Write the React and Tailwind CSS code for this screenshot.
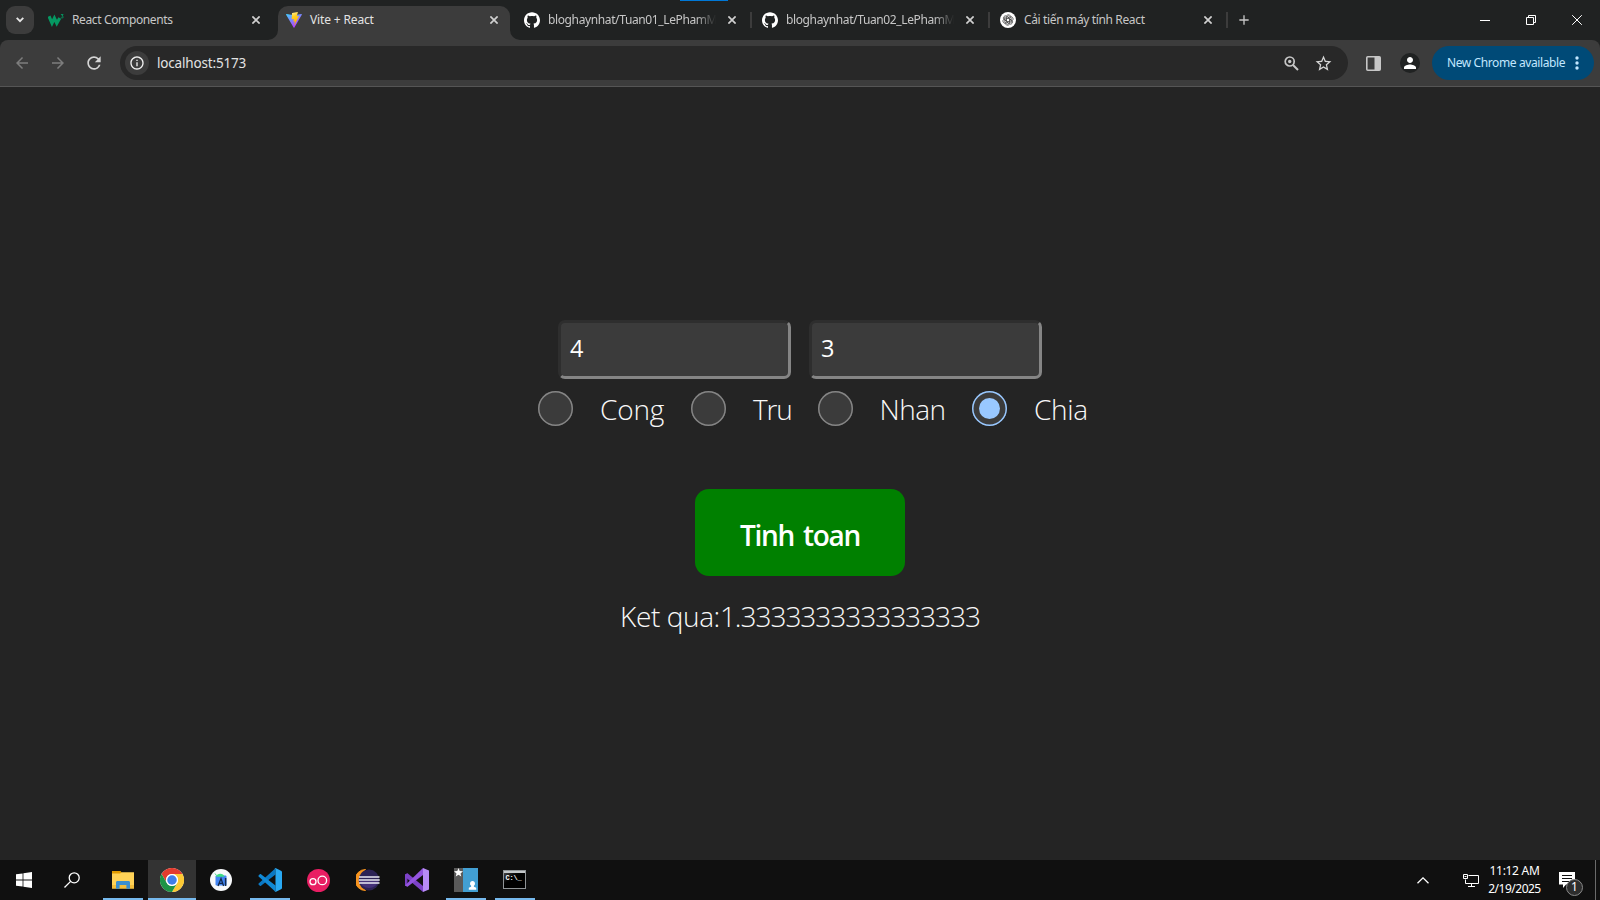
import React from "react";
import { SiGithub } from "react-icons/si";
import { MdArrowBack, MdArrowForward, MdRefresh, MdInfoOutline, MdStarBorder, MdPerson, MdAdd } from "react-icons/md";

const W3 = () => (
  <svg width="16" height="16" viewBox="0 0 16 16" fill="none">
    <path d="M1 4.200l3 7 2.400-5 2.400 5 3-5.200" stroke="#059862" strokeWidth="3.200" />
    <path d="M12.900 2.600h2.200l-1.200 1.500c1 0 1.500.5 1.300 1.200-.2.700-1.500.8-2.300.2" stroke="#059862" strokeWidth="1" />
  </svg>
);

const Vite = () => (
  <svg width="16" height="16" viewBox="0 0 16 16">
    <defs>
      <linearGradient id="vt" x1="0" y1="0" x2=".6" y2="1"><stop stopColor="#41d1ff" /><stop offset="1" stopColor="#bd34fe" /></linearGradient>
      <linearGradient id="bolt" x1=".4" y1="0" x2=".6" y2="1"><stop stopColor="#ffea83" /><stop offset=".3" stopColor="#ffcf1f" /><stop offset="1" stopColor="#ffa800" /></linearGradient>
    </defs>
    <path d="M15.8 2.7 8.4 15.5c-.2.3-.6.3-.8 0L.1 2.7c-.2-.4.1-.8.5-.7l7.4 1.2 7.3-1.2c.4-.1.7.3.5.7Z" fill="url(#vt)" />
    <path d="M11.5.1 6.2 1.1c-.1 0-.2.1-.2.3l-.3 5.6c0 .2.1.3.3.3l1.5-.3c.2 0 .3.1.3.3l-.4 2.1c0 .2.1.3.3.2l.9-.2c.2-.1.3.1.3.2l-.7 3.3c0 .2.2.3.3.1l4.4-8.8c.1-.2-.1-.4-.3-.3l-1.500.3c-.2 0-.3-.1-.3-.3l1-3.4c.1-.3-.1-.4-.3-.4Z" fill="url(#bolt)" />
  </svg>
);

const Gpt = () => (
  <svg width="16" height="16" viewBox="0 0 16 16" fill="none">
    <circle cx="8" cy="8" r="8" fill="#fff" />
    <g stroke="#444" strokeWidth=".75">
      {[0, 60, 120, 180, 240, 300].map((a) => (
        <path key={a} transform={`rotate(${a} 8 8)`} d="M6.2 9V5.2c0-3 4-3.2 4.5-.6M6.2 6.9l3.3-1.9 2.6 1.5" />
      ))}
    </g>
  </svg>
);

const tabs = [
  { icon: <W3 />, title: "React Components", cls: "tracking-[-0.37px]" },
  { icon: <Vite />, title: "Vite + React", active: true, cls: "tracking-[-0.15px]" },
  { icon: <SiGithub size={16} color="#fff" />, title: "bloghaynhat/Tuan01_LePhamM", sep: true, fade: true, cls: "tracking-[-0.38px]" },
  { icon: <SiGithub size={16} color="#fff" />, title: "bloghaynhat/Tuan02_LePhamM", sep: true, fade: true, cls: "tracking-[-0.38px]" },
  { icon: <Gpt />, title: "Cải tiến máy tính React", sep: true, cls: "tracking-[-0.36px]" },
];

function Tab({ icon, title, active, sep, fade, cls }) {
  return (
    <div className="flex h-[34px] w-[238px] shrink-0">
      <div className={"relative h-full w-[232px] pl-2 " + (active ? "rounded-t-[10px] bg-[#3c3c3c]" : "")}>
        {active && (
          <>
            <svg className="absolute -left-[10px] bottom-0" width="10" height="10"><path d="M10 0v10H0A10 10 0 0 0 10 0Z" fill="#3c3c3c" /></svg>
            <svg className="absolute -right-[10px] bottom-0" width="10" height="10"><path d="M0 0v10h10A10 10 0 0 1 0 0Z" fill="#3c3c3c" /></svg>
          </>
        )}
        <div className="flex h-7 items-center">
          <span className="flex w-4 shrink-0 items-center">{icon}</span>
          <span className={"ml-2 w-[168px] whitespace-nowrap text-[12px] leading-5 " + cls + (active ? " text-[#e3e3e3]" : " text-[#c7c7c7]") + (fade ? " [mask-image:linear-gradient(to_right,#000_88%,transparent)]" : "")}>{title}</span>
          <svg className="ml-3 shrink-0" width="8" height="8" stroke="#d0d0d0" strokeWidth="1.700"><path d="M.4.400l7.200 7.200M7.600.400.400 7.600" /></svg>
        </div>
      </div>
      {sep && <span className="mt-[6px] ml-[2px] h-4 w-[2px] bg-[#3c3c3c]" />}
    </div>
  );
}

function Field({ value }) {
  return (
    <div className="flex h-[59px] w-[233px] items-center rounded-[7px] border-[3px] border-t-[#2e2e2e] border-l-[#2e2e2e] border-r-[#858585] border-b-[#858585] bg-[#3b3b3b] pb-px pl-[9px] text-[23.5px] leading-none tracking-[-1px] text-white">
      {value}
    </div>
  );
}

function Radio({ label, on, cls, text = "" }) {
  return (
    <div className={"flex items-center " + cls}>
      <span className={"flex h-[35px] w-[35px] shrink-0 items-center justify-center rounded-full bg-[#3b3b3b] shadow-[inset_0_0_0_1.5px] " + (on ? "shadow-[#99c8ff]" : "shadow-[#858585]")}>
        {on && <span className="h-[21px] w-[21px] rounded-full bg-[#99c8ff]" />}
      </span>
      <span className={"ml-[27px] pt-px leading-8 whitespace-nowrap " + text}>{label}</span>
    </div>
  );
}

const Explorer = () => (
  <svg width="22" height="18" viewBox="0 0 22 18">
    <path d="M0 0h8.5l1.5 2v2H0Z" fill="#e09a00" />
    <path d="M0 2.6h8l1.8-1.4H22V17.500H0Z" fill="#ffd257" />
    <path d="M0 14h22v3.500H0Z" fill="#f3bd3b" />
    <path d="M4 17.700v-6.200c0-1 .6-1.500 1.500-1.500h11c.9 0 1.500.5 1.500 1.500v6.200h-3.600V14H7.600v3.700Z" fill="#3a8fd0" />
  </svg>
);
const Chrome = () => (
  <svg width="24" height="24" viewBox="0 0 48 48">
    <circle cx="24" cy="24" r="24" fill="#fff" />
    <path d="M3.200 12A24 24 0 0 1 44.800 12H24A12 12 0 0 0 13.600 30Z" fill="#e33b2e" />
    <path d="M44.800 12A24 24 0 0 1 24 48L34.400 30A12 12 0 0 0 24 12Z" fill="#fcc934" />
    <path d="M24 48A24 24 0 0 1 3.200 12L13.600 30A12 12 0 0 0 34.400 30Z" fill="#1e9446" />
    <circle cx="24" cy="24" r="12" fill="#fff" />
    <circle cx="24" cy="24" r="9.500" fill="#3f7ee8" />
  </svg>
);
const Studio = () => (
  <svg width="22" height="22" viewBox="0 0 22 22">
    <circle cx="11" cy="11" r="11" fill="#f7f9fb" />
    <rect x="5.500" y="6.500" width="11" height="10" rx="1" fill="#4285f4" />
    <path d="M6 7.800A4.500 4.500 0 0 1 14.500 7.800Z" fill="#3ddc84" />
    <path d="M5 4.500l1.500 2" stroke="#3ddc84" />
    <path d="M8 17 11 9.500l2.600 7.500M9 14.400h4" stroke="#11294d" strokeWidth="1.300" fill="none" />
    <path d="M15.600 9v8" stroke="#11294d" strokeWidth="1.500" />
  </svg>
);
const VsCode = () => (
  <svg width="24" height="24" viewBox="0 0 24 24">
    <path d="M17.500 6.500V.2L.6 15.400c-.4.400-.4.900 0 1.200l1.200 1.100c.3.300.8.300 1.200 0Z" fill="#0a78c4" />
    <path d="M17.500 17.500v6.300L.6 8.600c-.4-.4-.4-.9 0-1.200l1.200-1.100c.3-.3.800-.3 1.200 0Z" fill="#1089d6" />
    <path d="M17.500.1 23 2.700c.5.300 1 .8 1 1.400v15.800c0 .6-.4 1.100-1 1.400l-5.500 2.600c-.6.200-1.100 0-1.500-.3.600.5 1.500.1 1.500-.7V1.100c0-.8-.9-1.200-1.500-.7.400-.4 1-.6 1.500-.3Z" fill="#29a9f3" />
  </svg>
);
const Glasses = () => (
  <svg width="23" height="23" viewBox="0 0 23 23" fill="none">
    <circle cx="11.500" cy="11.500" r="11.500" fill="#e91e63" />
    <circle cx="6" cy="12.700" r="3" stroke="#fff" strokeWidth="1.300" />
    <circle cx="15.300" cy="11.400" r="4.300" stroke="#fff" strokeWidth="1.300" />
  </svg>
);
const Eclipse = () => (
  <svg width="24" height="22" viewBox="0 0 24 22">
    <path d="M9.500.5A10.500 10.500 0 0 0 9.500 21.500 12 12 0 0 1 9.500.5Z" fill="#f7941e" stroke="#f7941e" />
    <circle cx="13" cy="11" r="10.400" fill="#2c2255" />
    <path d="M3.500 12h19a10 10 0 0 1-19 0Z" fill="#443078" />
    <path d="M3 8h20.500M2.700 11h21M3 14h20.500" stroke="#e9e8f2" strokeWidth="1.500" />
  </svg>
);
const VStudio = () => (
  <svg width="24" height="24" viewBox="0 0 24 24">
    <path d="M0 6.500 2.500 5.300v13.400L0 17.500Z" fill="#6a32b0" />
    <path d="M0 6.500 2.500 5.300 18 18v6L1.500 10v7.300L0 17.500Z" fill="#7d42c8" />
    <path d="M18 0 18 7 2.500 18.700 0 17.500 5 12.500Z" fill="#9455e0" />
    <path d="M18 0l6 2.500v19L18 24Z" fill="#b78bf5" />
  </svg>
);
const Contacts = () => (
  <svg width="24" height="24" viewBox="0 0 24 24">
    <rect width="9" height="24" fill="#5a5a5a" />
    <rect x="9" width="15" height="24" fill="#429fd3" />
    <path d="M4.500 0 5.700 3.100 9 3.300 6.500 5.400 7.300 8.600 4.500 6.800 1.700 8.600 2.500 5.400 0 3.300 3.300 3.100Z" fill="#fff" />
    <path d="M18.500 13a2.400 2.600 0 0 1 1.400 4.800v1l2.300.9v2h-7.400v-2l2.300-.9v-1A2.400 2.600 0 0 1 18.500 13Z" fill="#fff" />
  </svg>
);
const Cmd = () => (
  <span className="mr-[2px] mb-px flex h-[19px] w-[23px] flex-col border border-[#8f9396] bg-gradient-to-br from-[#555] via-black to-black">
    <span className="h-[2px] shrink-0 bg-[#c4c8ca]" />
    <span className="pl-[2px] pt-px font-['Liberation_Mono',monospace] text-[7px] leading-[8px] font-bold tracking-[-0.2px] text-white">C:\_</span>
  </span>
);
const Start = () => (
  <svg width="16" height="16" viewBox="0 0 16 16" fill="#fff"><path d="M0 2.300 6.600 1.400V7.600H0ZM7.400 1.200 16 0V7.600H7.400ZM0 8.400H6.600V14.600L0 13.700ZM7.400 8.400H16V16L7.400 14.800Z" /></svg>
);
const Search = () => (
  <svg width="16" height="16" viewBox="0 0 16 16" fill="none" stroke="#fff" strokeWidth="1.300"><circle cx="10.200" cy="5.800" r="5" /><path d="M6.600 9.400.5 15.500" /></svg>
);

const apps = [
  { el: <Explorer />, w: "w-[50px]", line: "w-10" },
  { el: <Chrome />, w: "w-12 bg-[#333]", line: "w-12" },
  { el: <Studio />, w: "w-[50px]" },
  { el: <VsCode />, w: "w-12", line: "w-10" },
  { el: <Glasses />, w: "w-[49px]" },
  { el: <Eclipse />, w: "w-[49px]" },
  { el: <VStudio />, w: "w-[50px]" },
  { el: <Contacts />, w: "w-12", line: "w-10" },
  { el: <Cmd />, w: "w-[50px]", line: "w-10" },
];

export default function App() {
  return (
    <div className="relative flex h-[900px] w-[1600px] flex-col overflow-hidden bg-[#242424] font-['Noto_Sans','Open_Sans',sans-serif]">
      <div className="absolute left-[680px] top-0 h-px w-12 bg-[#0078d7]" />
      <header className="flex h-10 shrink-0 bg-[#202222] pt-[6px]">
        <div className="ml-[6px] mr-[6px] flex h-7 w-7 items-center justify-center rounded-[9px] bg-[#3c3c3c]">
          <svg width="8" height="6" fill="none" stroke="#e6e6e6" strokeWidth="1.800"><path d="M.7.900 4 4.200 7.300.900" /></svg>
        </div>
        {tabs.map((t, i) => <Tab key={i} {...t} />)}
        <MdAdd className="ml-[6px] mt-[6px]" size={16} color="#c7c7c7" />
        <div className="mt-[9px] ml-auto flex h-[10px] items-center pr-[18px]">
          <span className="h-px w-[10px] bg-white" />
          <svg className="ml-9" width="10" height="10" fill="none" stroke="#fff"><path d="M.5 2.500h7v7h-7ZM2.500 2.500v-2h7v7h-2" /></svg>
          <svg className="ml-9" width="10" height="10" stroke="#fff"><path d="M.2.200l9.600 9.600M9.800.200.200 9.800" /></svg>
        </div>
      </header>

      <div className="flex h-[47px] shrink-0 bg-[#202222]">
        <div className="flex h-full w-full items-start rounded-t-[8px] border-b border-[#555] bg-[#3c3c3c] pt-[6px]">
          <div className="flex h-[34px] w-[120px] shrink-0 items-center gap-[18px] pl-[13px]">
            <MdArrowBack size={18} color="#7d7d7d" />
            <MdArrowForward size={18} color="#7d7d7d" />
            <MdRefresh className="-ml-px" size={20} color="#d5d5d5" />
          </div>
          <div className="flex h-[34px] w-[1228px] shrink-0 items-center rounded-full bg-[#282828] pl-[5px]">
            <span className="flex h-6 w-6 items-center justify-center rounded-full bg-[#3c3c3c]"><MdInfoOutline size={16} color="#f0f0f0" /></span>
            <span className="ml-2 text-[13.500px] leading-5 tracking-[-0.17px] text-[#e3e3e3]">localhost:5173</span>
            <svg className="ml-auto" width="15" height="15" viewBox="0 0 15 15" fill="none" stroke="#c7c7c7"><circle cx="5.700" cy="5.500" r="4.500" strokeWidth="1.700" /><circle cx="5.700" cy="5.500" r="1.700" fill="#c7c7c7" stroke="none" /><path d="M9 9l5 5" strokeWidth="1.900" /></svg>
            <MdStarBorder className="mr-[15px] ml-[15px]" size={19} color="#d5d5d5" />
          </div>
          <div className="ml-[18px] flex h-[34px] items-center">
            <svg width="15" height="15" viewBox="0 0 15 15"><rect x=".8" y=".8" width="13.400" height="13.400" rx="1" fill="none" stroke="#c7c7c7" strokeWidth="1.600" /><path d="M8.500 1H14v13H8.500Z" fill="#c7c7c7" /></svg>
            <span className="ml-[19px] flex h-5 w-5 items-center justify-center rounded-full bg-[#202222]"><MdPerson size={18} color="#fff" /></span>
          </div>
          <div className="ml-3 flex h-[34px] w-[162px] items-center rounded-full bg-[#004a77] pl-[15px] text-[#c2e7ff]">
            <span className="w-[122px] text-[12px] leading-5 tracking-[-0.4px] whitespace-nowrap">New Chrome available</span>
            <svg className="ml-[6px]" width="4" height="14" fill="#c2e7ff"><circle cx="2" cy="2" r="1.700" /><circle cx="2" cy="7" r="1.700" /><circle cx="2" cy="12" r="1.700" /></svg>
          </div>
        </div>
      </div>

      <main className="flex h-[773px] shrink-0 flex-col items-center pt-[233px] text-[28px] text-[#f8f8f8] font-light font-['Open_Sans','Noto_Sans',sans-serif]">
        <div className="flex gap-[18px] font-normal">
          <Field value="4" />
          <Field value="3" />
        </div>
        <div className="mt-3 flex h-[35px] w-[1600px] pl-[538px]">
          <Radio label="Cong" cls="w-[153px]" text="tracking-[-0.2px]" />
          <Radio label="Tru" cls="w-[126.5px]" text="tracking-[-1.200px]" />
          <Radio label="Nhan" cls="w-[154.500px]" text="tracking-[-0.5px]" />
          <Radio label="Chia" on cls="w-[153px]" text="tracking-[-0.3px]" />
        </div>
        <div className="mt-[63px] flex h-[87px] w-[210px] items-center justify-center rounded-[14px] bg-[#008000] pt-[5px] font-semibold leading-8 tracking-[-1.300px] [word-spacing:3px] text-white">Tinh toan</div>
        <div className="mt-6 leading-8 tracking-[-0.4px] whitespace-nowrap">Ket qua:<span className="tracking-[-1.020px]">1.3333333333333333</span></div>
      </main>

      <footer className="flex h-10 shrink-0 bg-[#101010]">
        <div className="flex w-12 items-center justify-center"><Start /></div>
        <div className="flex w-12 items-center justify-center"><Search /></div>
        <div className="w-[2px]" />
        {apps.map((a, i) => (
          <div key={i} className={"flex h-10 shrink-0 flex-col items-center " + a.w}>
            <div className="flex h-[38px] items-center pt-[2px]">{a.el}</div>
            {a.line && <div className={"h-[2px] bg-[#76b9ed] " + a.line} />}
          </div>
        ))}
        <div className="ml-auto flex h-10 items-center text-white">
          <svg width="12" height="7" fill="none" stroke="#fff" strokeWidth="1.300"><path d="M.5 6.300 6 .9l5.500 5.400" /></svg>
          <svg className="ml-[34px]" width="16" height="13" fill="none" stroke="#fff"><path d="M5.500 1.500h10v8h-13V5.500M.5.500h4v4h-4ZM8.500 9.500v3M5 12.500h7M1.500 2.500h2" /></svg>
          <div className="mr-px ml-[9px] w-[53px] text-center text-[12px] leading-[18px] whitespace-nowrap">
            <div className="tracking-[-0.3px]">11:12 AM</div>
            <div className="-mx-2 tracking-[-0.5px]">2/19/2025</div>
          </div>
          <div className="relative ml-[17px] h-[17px] w-4">
            <svg width="16" height="16" viewBox="0 0 16 16"><path d="M0 0h16v12.500H7L4 16v-3.500H0Z" fill="#fff" /><path d="M3 3.500h10M3 6.500h10M3 9.500h7" stroke="#101010" /></svg>
            <span className="absolute left-[7px] top-[7px] flex h-[17px] w-[17px] items-center justify-center rounded-full border border-[#8a8a8a] bg-[#2d2d2d] text-[12px] leading-none">1</span>
          </div>
          <span className="ml-5 mr-1 h-10 w-px bg-[#6a6a6a]" />
        </div>
      </footer>
    </div>
  );
}
